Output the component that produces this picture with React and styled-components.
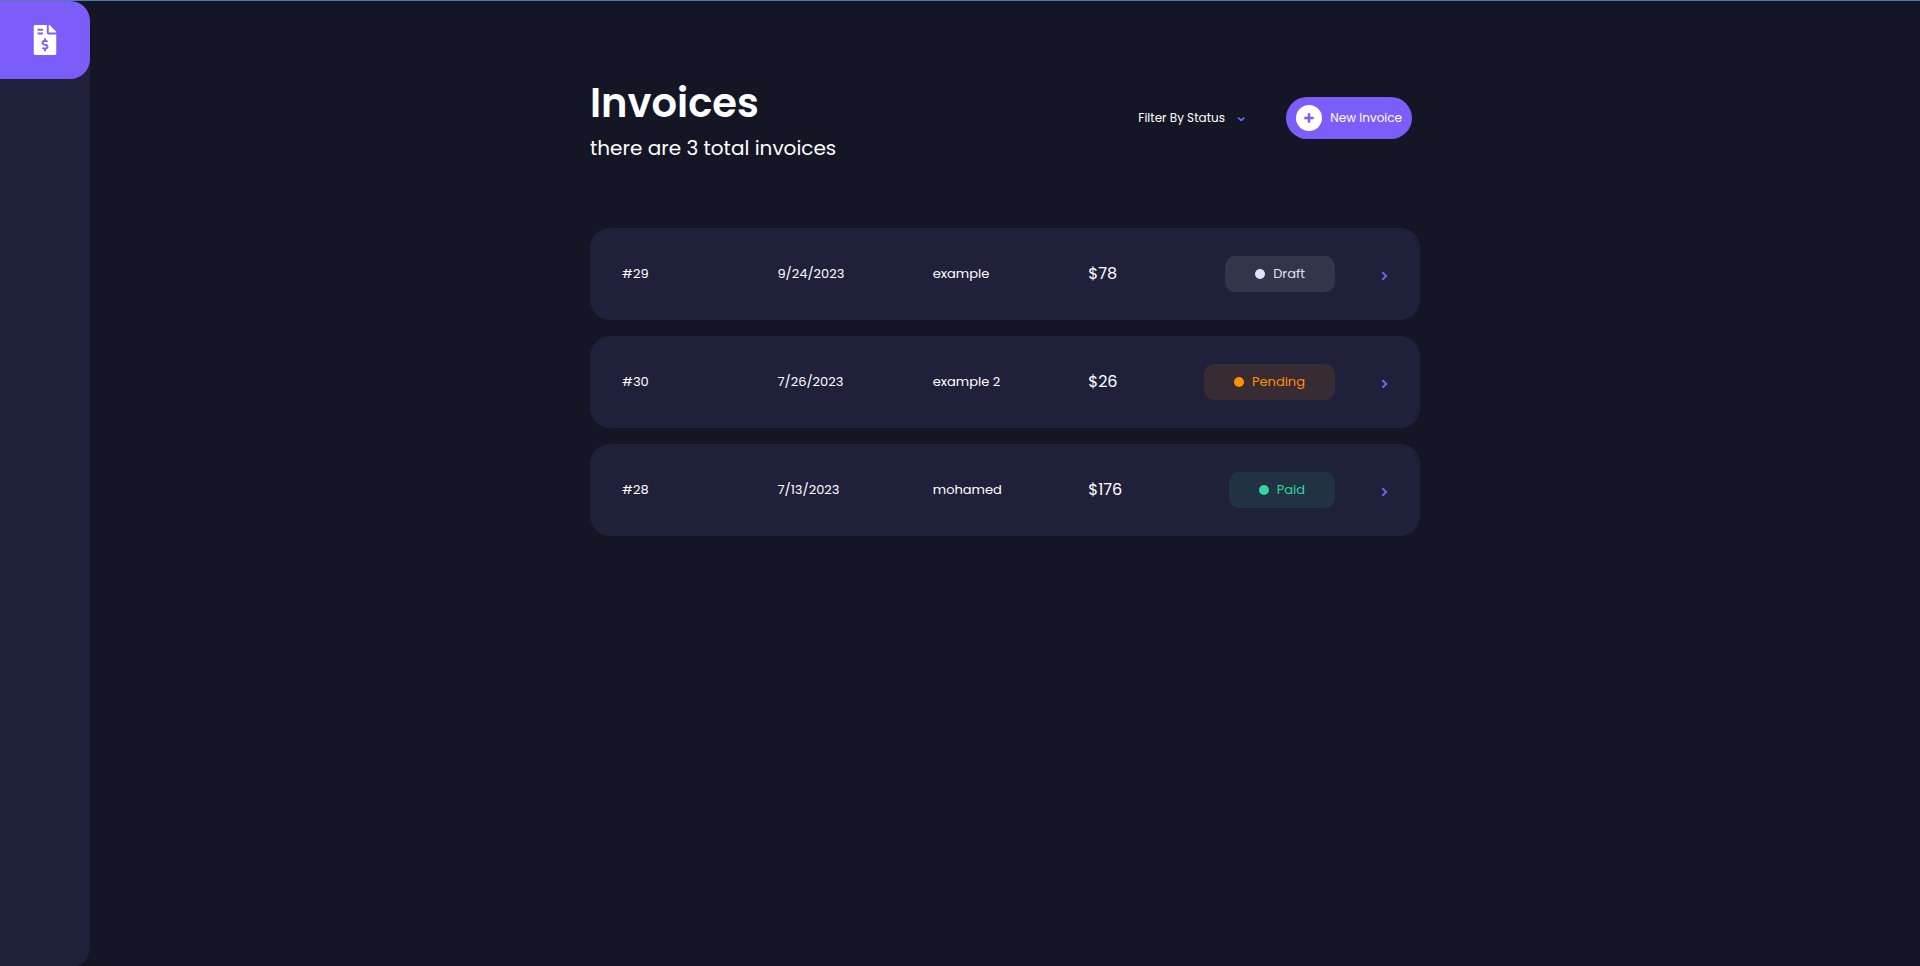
import React from "react";
import styled, { createGlobalStyle } from "styled-components";
import { FaFileInvoiceDollar } from "react-icons/fa";

const GlobalStyle = createGlobalStyle`
  *, *::before, *::after { box-sizing: border-box; }
  body {
    margin: 0;
    overflow: hidden;
    border-top: 1px solid #4a7ab0;
    background: #141625;
    color: #fff;
    font-family: Poppins, Inter, sans-serif;
  }
`;

const Page = styled.div`
  display: flex;
  height: 100vh;
`;

const Sidebar = styled.aside`
  flex: 0 0 90px;
  background: #1f213a;
  border-radius: 0 20px 20px 0;
`;

const Logo = styled.a`
  display: flex;
  align-items: center;
  justify-content: center;
  height: 78px;
  border-radius: 0 20px 20px 0;
  background: #7c5dfa;
  color: #fff;
`;

const Main = styled.main`
  flex: 1;
  min-width: 0;
  padding: 72px 24px;
`;

const Content = styled.div`
  max-width: 830px;
  margin: 0 auto;
`;

const Header = styled.header`
  display: flex;
  align-items: center;
  justify-content: space-between;
  padding-right: 8px;
  margin-bottom: 65px;
`;

const Title = styled.h1`
  margin: 0;
  font-size: 40px;
  line-height: 60px;
  font-weight: 600;
`;

const Subtitle = styled.p`
  margin: 0;
  font-size: 20px;
  line-height: 30px;
`;

const Actions = styled.div`
  display: flex;
  align-items: center;
  gap: 40px;
`;

const Filter = styled.label`
  display: flex;
  align-items: center;
  gap: 10px;
`;

const FilterSelect = styled.select`
  appearance: none;
  padding: 0;
  border: 0;
  background: transparent;
  color: inherit;
  font-family: inherit;
  font-size: 12px;
  font-weight: 400;
  line-height: 18px;
`;

const NewButton = styled.button`
  display: flex;
  align-items: center;
  gap: 8px;
  height: 42px;
  padding: 0 10px;
  border: 0;
  border-radius: 21px;
  background: #7c5dfa;
  color: #fff;
  font-family: inherit;
  font-size: 12px;
  font-weight: 400;
`;

const PlusCircle = styled.span`
  display: flex;
  align-items: center;
  justify-content: center;
  width: 26px;
  height: 26px;
  border-radius: 50%;
  background: #fff;
`;

const List = styled.ul`
  display: grid;
  gap: 16px;
  margin: 0;
  padding: 0;
  list-style: none;
`;

const InvoiceLink = styled.a`
  display: grid;
  grid-template-columns: repeat(5, minmax(0, 1fr));
  column-gap: 11px;
  align-items: center;
  padding: 28px 32px;
  border-radius: 20px;
  background: #1f213a;
  color: #fff;
  font-size: 13px;
  line-height: 20px;
  text-decoration: none;
`;

const Amount = styled.span`
  font-size: 16px;
  line-height: 24px;
`;

const StatusCell = styled.span`
  display: flex;
  align-items: center;
  justify-content: flex-end;
  gap: 44px;
`;

const tones = {
  Draft: ["#dfe3fa", "#33354b"],
  Pending: ["#ff8f00", "#382c34"],
  Paid: ["#33d69f", "#213343"],
};

const Badge = styled.span`
  display: flex;
  align-items: center;
  gap: 8px;
  height: 36px;
  padding: 0 30px;
  border-radius: 10px;
  color: ${(p) => tones[p.$status][0]};
  background: ${(p) => tones[p.$status][1]};

  &::before {
    content: "";
    width: 10px;
    height: 10px;
    border-radius: 50%;
    background: currentColor;
  }
`;

const Stroke = styled.svg`
  flex: none;
  fill: none;
  stroke: #7c5dfa;
  stroke-width: 2;
`;

const invoices = [
  { id: "#29", date: "9/24/2023", name: "example", total: "$78", status: "Draft" },
  { id: "#30", date: "7/26/2023", name: "example 2", total: "$26", status: "Pending" },
  { id: "#28", date: "7/13/2023", name: "mohamed", total: "$176", status: "Paid" },
];

export default function App() {
  return (
    <>
      <GlobalStyle />
      <Page>
        <Sidebar>
          <Logo href="#" aria-label="Home">
            <FaFileInvoiceDollar size={30} />
          </Logo>
        </Sidebar>
        <Main>
          <Content>
            <Header>
              <div>
                <Title>Invoices</Title>
                <Subtitle>there are 3 total invoices</Subtitle>
              </div>
              <Actions>
                <Filter>
                  <FilterSelect aria-label="Filter By Status">
                    <option>Filter By Status</option>
                    <option>Draft</option>
                    <option>Pending</option>
                    <option>Paid</option>
                  </FilterSelect>
                  <Stroke width="11" height="7" viewBox="0 0 11 7">
                    <path d="M3 2.6l3.2 2.8 3.2-2.8" strokeWidth="1.7" />
                  </Stroke>
                </Filter>
                <NewButton type="button">
                  <PlusCircle>
                    <Stroke width="10" height="10" viewBox="0 0 10 10">
                      <path d="M5 0.3v9.4M0.3 5h9.4" strokeWidth="2.5" />
                    </Stroke>
                  </PlusCircle>
                  New Invoice
                </NewButton>
              </Actions>
            </Header>
            <List>
              {invoices.map((inv) => (
                <li key={inv.id}>
                  <InvoiceLink href="#">
                    <span>{inv.id}</span>
                    <span>{inv.date}</span>
                    <span>{inv.name}</span>
                    <Amount>{inv.total}</Amount>
                    <StatusCell>
                      <Badge $status={inv.status}>{inv.status}</Badge>
                      <Stroke width="9" height="14" viewBox="0 0 9 14">
                        <path d="M3.4 5.2l3.8 3.7-3.8 3.7" />
                      </Stroke>
                    </StatusCell>
                  </InvoiceLink>
                </li>
              ))}
            </List>
          </Content>
        </Main>
      </Page>
    </>
  );
}
